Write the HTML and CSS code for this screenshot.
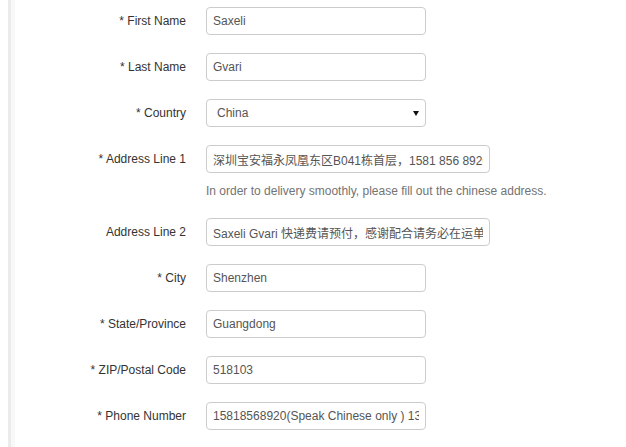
FILE: index.html
```html
<!DOCTYPE html>
<html>
<head>
<meta charset="utf-8">
<link rel="stylesheet" href="styles.css">
</head>
<body>
<div class="panel">
  <form class="form">
    <div class="row">
      <label class="label">* First Name</label>
      <input class="field" type="text" value="Saxeli">
    </div>
    <div class="row">
      <label class="label">* Last Name</label>
      <input class="field" type="text" value="Gvari">
    </div>
    <div class="row">
      <label class="label">* Country</label>
      <div class="select-wrap">
        <select class="field select"><option>China</option></select>
      </div>
    </div>
    <div class="row">
      <label class="label">* Address Line 1</label>
      <input class="field wide" type="text" value="深圳宝安福永凤凰东区B041栋首层，1581 856 8920">
      <p class="help">In order to delivery smoothly, please fill out the chinese address.</p>
    </div>
    <div class="row">
      <label class="label">Address Line 2</label>
      <input class="field wide" type="text" value="Saxeli Gvari 快递费请预付，感谢配合请务必在运单上">
    </div>
    <div class="row">
      <label class="label">* City</label>
      <input class="field" type="text" value="Shenzhen">
    </div>
    <div class="row">
      <label class="label">* State/Province</label>
      <input class="field" type="text" value="Guangdong">
    </div>
    <div class="row">
      <label class="label">* ZIP/Postal Code</label>
      <input class="field" type="text" value="518103">
    </div>
    <div class="row">
      <label class="label">* Phone Number</label>
      <input class="field" type="text" value="15818568920(Speak Chinese only ) 13826568920">
    </div>
  </form>
</div>
</body>
</html>
```
FILE: styles.css
```css
html, body {
  margin: 0;
  padding: 0;
  background: #fff;
}
body {
  font-family: "Liberation Sans", Arial, "Noto Sans CJK SC", sans-serif;
  font-size: 12px;
  color: #333;
}
.panel {
  margin-left: 8px;
  min-height: 447px;
  border-left: 3px solid #ebebeb;
  box-shadow: inset 4px 0 0 #f8f8f8;
  box-sizing: border-box;
}
.form {
  margin: 0;
  padding-top: 7px;
}
.row {
  display: grid;
  grid-template-columns: 175px auto;
  column-gap: 20px;
  align-items: center;
  justify-content: start;
  margin-bottom: 18px;
}
.label {
  text-align: right;
  color: #333;
}
.field {
  box-sizing: border-box;
  width: 220px;
  height: 28px;
  margin: 0;
  padding: 0 6px;
  border: 1px solid #ccc;
  border-radius: 4px;
  background: #fff;
  font-family: "Liberation Sans", Arial, "Noto Sans CJK SC", sans-serif;
  font-size: 12px;
  color: #555;
  outline: none;
}
.field.wide {
  width: 284px;
}
.select-wrap {
  position: relative;
  width: 220px;
}
.select {
  appearance: none;
  -webkit-appearance: none;
  padding: 0 10px;
  display: block;
}
.select-wrap::after {
  content: "";
  position: absolute;
  right: 7px;
  top: 12px;
  border-left: 3px solid transparent;
  border-right: 3px solid transparent;
  border-top: 5px solid #111;
  pointer-events: none;
}
.help {
  grid-column: 2;
  margin: 9px 0 0;
  line-height: 18px;
  color: #737373;
}
```
